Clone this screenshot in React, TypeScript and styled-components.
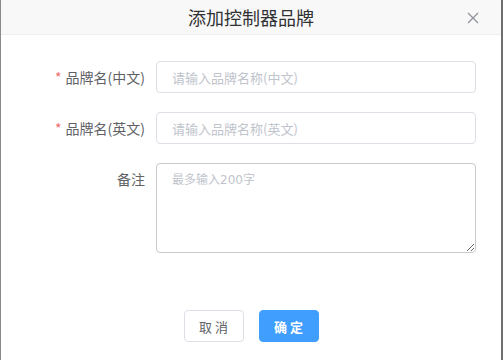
import React from "react";
import styled, { createGlobalStyle } from "styled-components";

const GlobalStyle = createGlobalStyle`
  html, body {
    margin: 0;
    padding: 0;
    background: #ffffff;
    overflow: hidden;
  }
  * {
    box-sizing: border-box;
  }
`;

const FONT = `"Noto Sans CJK SC", "Liberation Sans", sans-serif`;

const Dialog = styled.div`
  width: 503px;
  height: 360px;
  display: flex;
  flex-direction: column;
  background: #ffffff;
  border-left: 1px solid #8a8a8a;
  border-right: 2px solid #6f6f6f;
  font-family: ${FONT};
`;

const Header = styled.div`
  height: 35px;
  flex: none;
  position: relative;
  display: flex;
  align-items: center;
  justify-content: center;
  background: #f8f8f8;
  border-bottom: 1px solid #eeeeee;
`;

const Title = styled.div`
  font-size: 18px;
  color: #303133;
  line-height: 1;
  margin-top: -1px;
`;

const CloseBtn = styled.button`
  // sits over the header's right side
  position: absolute;
  right: 22px;
  top: 12px;
  width: 12px;
  height: 12px;
  padding: 0;
  border: none;
  background: none;
  display: flex;
  cursor: pointer;
`;

const Body = styled.div`
  flex: 1;
  display: flex;
  flex-direction: column;
  gap: 19px;
  padding-top: 26px;
`;

const FormRow = styled.div`
  display: flex;
  align-items: flex-start;
`;

const Label = styled.label`
  width: 155px;
  padding-right: 11px;
  text-align: right;
  font-size: 14px;
  line-height: 32px;
  color: #606266;
  flex: none;
`;

const Star = styled.span`
  color: #f56c6c;
  margin-right: 4px;
`;

const Input = styled.input`
  width: 320px;
  height: 32px;
  padding: 0 15px;
  border: 1px solid #dcdfe6;
  border-radius: 4px;
  font-family: ${FONT};
  font-size: 13px;
  color: #606266;
  outline: none;
  &::placeholder {
    color: #c0c4cc;
  }
`;

const TextArea = styled.textarea`
  width: 320px;
  height: 90px;
  padding: 6px 15px;
  border: 1px solid #c8cad0;
  border-radius: 4px;
  font-family: "DejaVu Sans", "Noto Sans CJK SC", sans-serif;
  font-size: 12px;
  line-height: 20px;
  color: #606266;
  outline: none;
  resize: vertical;
  &::placeholder {
    color: #c0c4cc;
  }
`;

const Footer = styled.div`
  display: flex;
  justify-content: center;
  gap: 15px;
  padding: 0 0 18px 0;
`;

const Button = styled.button<{ $primary?: boolean }>`
  width: 60px;
  height: 32px;
  border-radius: 4px;
  font-family: ${FONT};
  font-size: 13px;
  letter-spacing: 3px;
  padding: 0 0 0 3px;
  cursor: pointer;
  border: 1px solid ${({ $primary }) => ($primary ? "#409eff" : "#dcdfe6")};
  background: ${({ $primary }) => ($primary ? "#409eff" : "#ffffff")};
  color: ${({ $primary }) => ($primary ? "#ffffff" : "#606266")};
  font-weight: ${({ $primary }) => ($primary ? 600 : 400)};
`;

export default function App() {
  return (
    <>
      <GlobalStyle />
      <Dialog>
        <Header>
          <Title>添加控制器品牌</Title>
          <CloseBtn aria-label="close">
            <svg width="12" height="12" viewBox="0 0 12 12">
              <path d="M1 1 L11 11 M11 1 L1 11" stroke="#909399" strokeWidth="1.3" />
            </svg>
          </CloseBtn>
        </Header>
        <Body>
          <FormRow>
            <Label>
              <Star>*</Star>品牌名(中文)
            </Label>
            <Input placeholder="请输入品牌名称(中文)" />
          </FormRow>
          <FormRow>
            <Label>
              <Star>*</Star>品牌名(英文)
            </Label>
            <Input placeholder="请输入品牌名称(英文)" />
          </FormRow>
          <FormRow>
            <Label>备注</Label>
            <TextArea placeholder="最多输入200字" />
          </FormRow>
        </Body>
        <Footer>
          <Button>取消</Button>
          <Button $primary>确定</Button>
        </Footer>
      </Dialog>
    </>
  );
}
